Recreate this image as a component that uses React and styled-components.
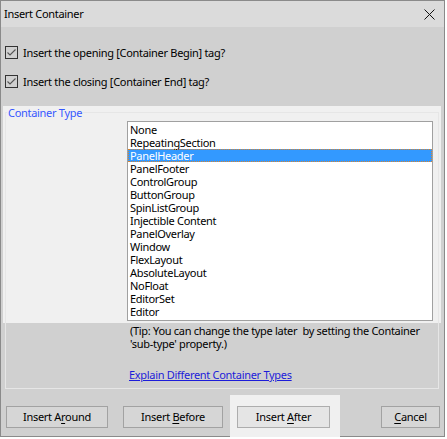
import styled, { createGlobalStyle } from "styled-components";

const GlobalStyle = createGlobalStyle`
  html, body {
    margin: 0;
    padding: 0;
    background: #fff;
  }
  body {
    font-family: "Noto Sans", "Liberation Sans", sans-serif;
    font-size: 11px;
    letter-spacing: -0.3px;
    color: #000;
  }
`;

const Window = styled.div`
  width: 445px;
  height: 437px;
  box-sizing: border-box;
  border: 1px solid #8a8a8a;
  background: #d0d0d0;
  display: flex;
  flex-direction: column;
`;

const TitleBar = styled.div`
  height: 26px;
  flex: none;
  background: #dbdbdb;
  display: flex;
  align-items: center;
  justify-content: space-between;
  padding: 0 9px 0 3px;
`;

const Title = styled.span`
  line-height: 26px;
`;

const CheckRow = styled.label`
  display: flex;
  align-items: center;
  gap: 5px;
  height: 13px;
  line-height: 13px;
  margin: ${(p) => p.$top}px 0 0 4px;
`;

const Section = styled.div`
  margin: 18px 3px 0 2px;
  padding: 6px 2px 0 2px;
  background: linear-gradient(#f0f0f0 0 217px, transparent 217px);
`;

const Frame = styled.div`
  position: relative;
  border: 1px solid #e6e6e6;
  padding: 8px 0 7px 0;
`;

const Legend = styled.span`
  position: absolute;
  top: -7px;
  left: 1px;
  padding: 0 1px;
  line-height: 13px;
  background: #f0f0f0;
  color: #3657ff;
`;

const ListBox = styled.div`
  margin-left: 121px;
  width: 306px;
  box-sizing: border-box;
  border: 1px solid #a0a0a0;
  background: #fff;
  padding: 1px 0 2px;
`;

const Item = styled.div`
  height: 13px;
  line-height: 13px;
  white-space: nowrap;
  padding-left: 2px;
  background: ${(p) => (p.$selected ? "#3399ff" : "transparent")};
  color: ${(p) => (p.$selected ? "#fff" : "#000")};
  outline: ${(p) => (p.$selected ? "1px dotted #d8842e" : "none")};
  outline-offset: -1px;
`;

const Tip = styled.div`
  margin: 3px 0 0 124px;
  line-height: 13px;
  white-space: pre;
`;

const Link = styled.a`
  display: block;
  margin: 18px 0 0 123px;
  line-height: 13px;
  color: #1c1cd9;
  text-decoration: underline;
  width: max-content;
`;

const ButtonRow = styled.div`
  display: flex;
  align-items: flex-start;
  height: 42px;
  margin-top: 6px;
  padding-left: 5px;
`;

const Highlight = styled.div`
  height: 42px;
  box-sizing: border-box;
  background: #f0f0f0;
  padding: 11px 10px 0 7px;
  margin-left: ${(p) => p.$offset}px;
`;

const Button = styled.button`
  width: ${(p) => p.$width}px;
  height: 22px;
  margin: ${(p) => (p.$inside ? 0 : 11)}px 0 0 ${(p) => p.$offset || 0}px;
  padding: 0;
  box-sizing: border-box;
  border: 1px solid ${(p) => (p.$inside ? "#adadad" : "#a2a2a2")};
  background: ${(p) => (p.$inside ? "#e5e5e5" : "#d6d6d6")};
  font-family: inherit;
  font-size: 11px;
  letter-spacing: -0.3px;
  color: #000;
  line-height: 20px;

  u {
    text-underline-offset: 2px;
  }
`;

const CheckBox = () => (
  <svg width="13" height="13" viewBox="0 0 13 13">
    <rect x="0.5" y="0.5" width="12" height="12" fill="none" stroke="#333" />
    <polyline
      points="2.5,6.5 5,9 10.5,3.5"
      fill="none"
      stroke="#555"
      strokeWidth="1.1"
    />
  </svg>
);

const CloseIcon = () => (
  <svg width="11" height="11" viewBox="0 0 11 11">
    <path d="M0.5 0.5 L10.5 10.5 M10.5 0.5 L0.5 10.5" stroke="#111" strokeWidth="1" />
  </svg>
);

const types = [
  "None",
  "RepeatingSection",
  "PanelHeader",
  "PanelFooter",
  "ControlGroup",
  "ButtonGroup",
  "SpinListGroup",
  "Injectible Content",
  "PanelOverlay",
  "Window",
  "FlexLayout",
  "AbsoluteLayout",
  "NoFloat",
  "EditorSet",
  "Editor",
];

const App = () => {
  return (
    <>
      <GlobalStyle />
      <Window>
        <TitleBar>
          <Title>Insert Container</Title>
          <CloseIcon />
        </TitleBar>
        <CheckRow $top={19}>
          <CheckBox />
          Insert the opening [Container Begin] tag?
        </CheckRow>
        <CheckRow $top={16}>
          <CheckBox />
          Insert the closing [Container End] tag?
        </CheckRow>
        <Section>
          <Frame>
            <Legend>Container Type</Legend>
            <ListBox>
              {types.map((t) => (
                <Item key={t} $selected={t === "PanelHeader"}>
                  {t}
                </Item>
              ))}
            </ListBox>
            <Tip>
              {"(Tip: You can change the type later  by setting the Container\n'sub-type' property.)"}
            </Tip>
            <Link href="#">Explain Different Container Types</Link>
          </Frame>
        </Section>
        <ButtonRow>
          <Button $width={102}>
            Insert A<u>r</u>ound
          </Button>
          <Button $width={100} $offset={15}>
            Insert <u>B</u>efore
          </Button>
          <Highlight $offset={7}>
            <Button $width={93} $inside>
              Insert <u>A</u>fter
            </Button>
          </Highlight>
          <Button $width={59} $offset={41}>
            <u>C</u>ancel
          </Button>
        </ButtonRow>
      </Window>
    </>
  );
};

export default App;
